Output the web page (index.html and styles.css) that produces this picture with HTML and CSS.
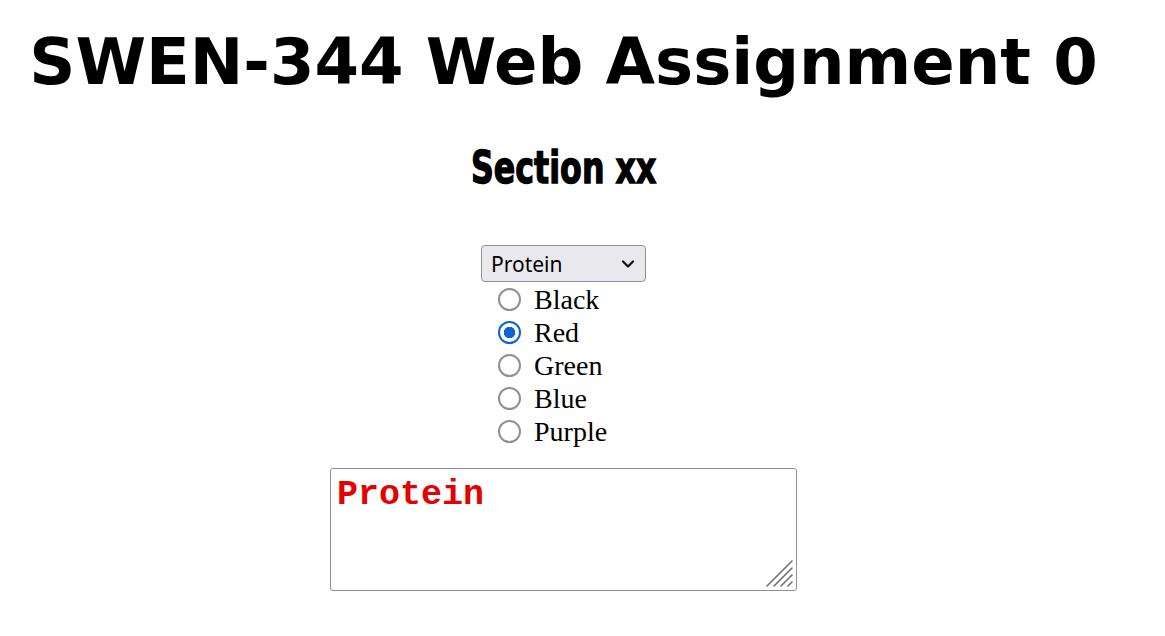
FILE: index.html
```html
<!DOCTYPE html>
<html>
<head>
<meta charset="utf-8">
<title>SWEN-344 Web Assignment 0</title>
<link rel="stylesheet" href="styles.css">
</head>
<body>
<div class="page">
  <h1 class="title">SWEN-344 Web Assignment 0</h1>
  <h2 class="section"><span class="section-text">Section xx</span></h2>
  <form class="controls">
    <div class="select-wrap">
      <select class="picker">
        <option>Protein</option>
      </select>
      <svg class="chev" width="14" height="10" viewBox="0 0 14 10"><path d="M2 2.5 L7 7.5 L12 2.5" fill="none" stroke="#111" stroke-width="2.2" stroke-linecap="round" stroke-linejoin="round"/></svg>
    </div>
    <div class="radios">
      <label class="row"><input type="radio" name="c" class="radio"><span>Black</span></label>
      <label class="row"><input type="radio" name="c" class="radio" checked><span>Red</span></label>
      <label class="row"><input type="radio" name="c" class="radio"><span>Green</span></label>
      <label class="row"><input type="radio" name="c" class="radio"><span>Blue</span></label>
      <label class="row"><input type="radio" name="c" class="radio"><span>Purple</span></label>
    </div>
    <div class="area-wrap">
      <textarea class="output">Protein</textarea>
      <svg class="grip" width="30" height="30" viewBox="0 0 30 30"><g stroke="#6f6f6f" stroke-width="1.6" stroke-linecap="round"><path d="M3 28 L28 3"/><path d="M10 28 L28 10"/><path d="M17 28 L28 17"/><path d="M24 28 L28 24"/></g></svg>
    </div>
  </form>
</div>
</body>
</html>
```
FILE: styles.css
```css
html, body {
  margin: 0;
  padding: 0;
  background: #fff;
}
body {
  padding: 0 8px;
}
.page {
  width: 1111px;
  display: flex;
  flex-direction: column;
  align-items: center;
}
.title {
  font-family: "DejaVu Sans", Verdana, sans-serif;
  font-weight: bold;
  font-size: 64px;
  line-height: 74px;
  margin: 25px 0 0 0;
  color: #000;
  white-space: nowrap;
}
.section {
  font-family: "DejaVu Sans", sans-serif;
  font-weight: bold;
  font-size: 44px;
  line-height: 50px;
  margin: 44px 0 0 0;
  color: #000;
  white-space: nowrap;
}
.section-text {
  display: inline-block;
  transform: scaleX(0.72);
  -webkit-text-stroke: 1.4px #000;
}
.controls {
  display: flex;
  flex-direction: column;
  align-items: center;
  margin-top: 52px;
}
.select-wrap {
  position: relative;
  width: 165px;
  height: 37px;
}
.picker {
  appearance: none;
  -webkit-appearance: none;
  width: 165px;
  height: 37px;
  box-sizing: border-box;
  border: 1px solid #8f8f9d;
  border-radius: 4px;
  background: #e9e9ed;
  font-family: "Noto Sans", "Open Sans", sans-serif;
  font-size: 21px;
  color: #000;
  padding: 0 0 0 9px;
  margin: 0;
}
.chev {
  position: absolute;
  right: 11px;
  top: 14px;
  pointer-events: none;
}
.radios {
  display: flex;
  flex-direction: column;
  align-items: flex-start;
  width: 165px;
  padding-left: 17px;
  box-sizing: border-box;
  margin-top: 1px;
}
.row {
  display: flex;
  align-items: center;
  height: 33px;
  font-family: "Liberation Serif", "Times New Roman", serif;
  font-size: 28px;
  color: #000;
}
.radio {
  appearance: none;
  -webkit-appearance: none;
  width: 23px;
  height: 23px;
  box-sizing: border-box;
  border: 2px solid #8f8f9d;
  border-radius: 50%;
  margin: 0 13px 0 0;
  background: #fff;
}
.radio:checked {
  border: 2px solid #0b63d6;
  background: radial-gradient(circle, #0b63d6 0 5.5px, #fff 6px);
}
.area-wrap {
  position: relative;
  margin-top: 20px;
  width: 467px;
  height: 123px;
}
.output {
  display: block;
  width: 467px;
  height: 123px;
  box-sizing: border-box;
  margin: 0;
  border: 1px solid #8f8f9d;
  border-radius: 3px;
  font-family: "Liberation Mono", "Courier New", monospace;
  font-weight: bold;
  font-size: 35px;
  line-height: 40px;
  color: #e60000;
  padding: 6px 6px;
  resize: none;
}
.grip {
  position: absolute;
  right: 3px;
  bottom: 3px;
  pointer-events: none;
}
```
